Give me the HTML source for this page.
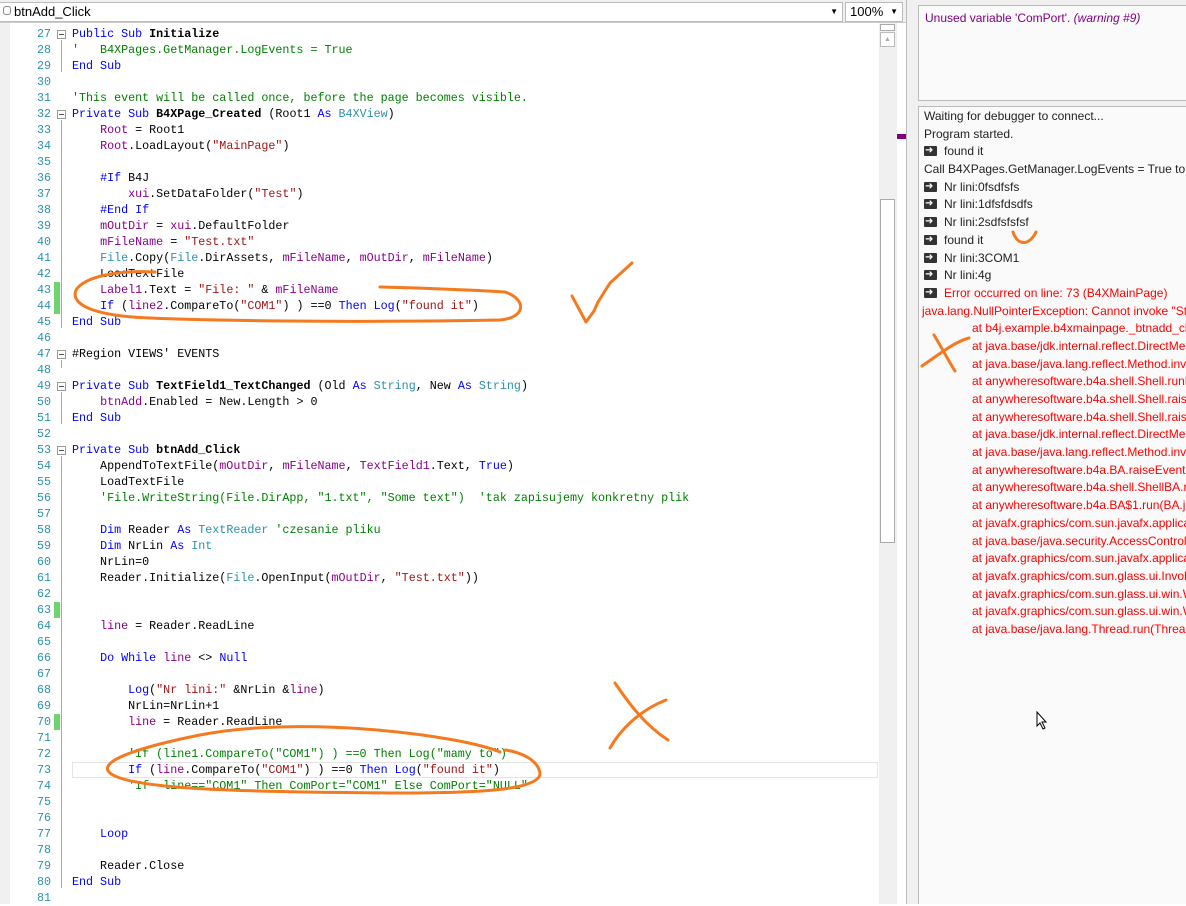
<!DOCTYPE html>
<html><head><meta charset="utf-8">
<style>
*{margin:0;padding:0;box-sizing:border-box}
body{width:1186px;height:904px;overflow:hidden;background:#fff;position:relative;font-family:"Liberation Sans",sans-serif}
.top{position:absolute;left:0;top:0;width:906px;height:23px;background:#f0f0f0;border-bottom:1px solid #ccc}
.combo{position:absolute;top:2px;height:20px;background:#fff;border:1px solid #bbb;font-size:13px;line-height:18px;padding-left:14px;color:#000}
.gut{position:absolute;left:0;top:23px;width:10px;height:881px;background:#f0f0f0}
.code{position:absolute;left:0;top:26px;width:878px;font-family:"Liberation Mono",monospace;font-size:11.7px}
.ln{height:16px;line-height:16px;position:relative;white-space:pre}
.n{position:absolute;left:10px;width:41px;text-align:right;color:#2b91af}
.t{position:absolute;left:72px;color:#000}
.k{color:#0000ff}.c{color:#008000}.s{color:#a31515}.v{color:#8b008b}.ty{color:#2b91af}.b{font-weight:bold}
.fold{position:absolute;left:57px;top:4px;width:9px;height:9px;border:1px solid #999;background:#fff}
.fold:after{content:"";position:absolute;left:1px;top:3px;width:5px;height:1px;background:#555}
.vl{position:absolute;left:61px;width:1px;background:#aaa}
.green{position:absolute;left:54px;width:6px;height:16px;background:#6ed46e}
.sb{position:absolute;left:879px;top:23px;width:18px;height:881px;background:#f0f0f0}
.right{position:absolute;left:906px;top:0;width:280px;height:904px;background:#f0f0f0;border-left:1px solid #bbb;overflow:hidden}
.box{position:absolute;left:11px;width:300px;background:#fafafa;border:1px solid #bbb;overflow:hidden}
.log{font-size:12px;line-height:17.7px;color:#222;white-space:nowrap;padding-left:5px;padding-top:1px}
.log div{height:17.7px}
.ar{display:inline-block;width:13px;height:10px;background:#333;border-radius:1px;vertical-align:-1px;margin-right:7px;position:relative}
.ar:after{content:"➜";position:absolute;left:1px;top:-4px;color:#fff;font-size:10px}
.r{color:#f00}
.at{padding-left:48px}
</style></head><body>
<div class="top">
 <div class="combo" style="left:0;width:843px;border-left:none">btnAdd_Click<span style="position:absolute;right:4px;font-size:8px">▼</span></div>
 <div style="position:absolute;left:3px;top:6px;width:8px;height:9px;border:1px solid #888;border-radius:3px"></div>
 <div class="combo" style="left:845px;width:58px;padding-left:4px">100%<span style="position:absolute;right:4px;font-size:8px">▼</span></div>
</div>
<div class="gut"></div>
<div class="vl" style="top:40px;height:32px"></div>
<div class="vl" style="top:120px;height:208px"></div>
<div class="vl" style="top:360px;height:8px"></div>
<div class="vl" style="top:392px;height:32px"></div>
<div class="vl" style="top:456px;height:432px"></div>
<div class="green" style="top:282px"></div><div class="green" style="top:298px"></div>
<div class="green" style="top:602px"></div><div class="green" style="top:714px"></div>
<div style="position:absolute;left:72px;top:762px;width:806px;height:16px;border:1px solid #e4e4e4"></div>
<div class="code">
<div class="ln"><span class="n">27</span><span class="fold"></span><span class="t"><span class="k">Public Sub</span> <span class="b">Initialize</span></span></div>
<div class="ln"><span class="n">28</span><span class="t c">'   B4XPages.GetManager.LogEvents = True</span></div>
<div class="ln"><span class="n">29</span><span class="t k">End Sub</span></div>
<div class="ln"><span class="n">30</span></div>
<div class="ln"><span class="n">31</span><span class="t c">'This event will be called once, before the page becomes visible.</span></div>
<div class="ln"><span class="n">32</span><span class="fold"></span><span class="t"><span class="k">Private Sub</span> <span class="b">B4XPage_Created</span> (Root1 <span class="k">As</span> <span class="ty">B4XView</span>)</span></div>
<div class="ln"><span class="n">33</span><span class="t">    <span class="v">Root</span> = Root1</span></div>
<div class="ln"><span class="n">34</span><span class="t">    <span class="v">Root</span>.LoadLayout(<span class="s">"MainPage"</span>)</span></div>
<div class="ln"><span class="n">35</span></div>
<div class="ln"><span class="n">36</span><span class="t">    <span class="k">#If</span> B4J</span></div>
<div class="ln"><span class="n">37</span><span class="t">        <span class="v">xui</span>.SetDataFolder(<span class="s">"Test"</span>)</span></div>
<div class="ln"><span class="n">38</span><span class="t">    <span class="k">#End If</span></span></div>
<div class="ln"><span class="n">39</span><span class="t">    <span class="v">mOutDir</span> = <span class="v">xui</span>.DefaultFolder</span></div>
<div class="ln"><span class="n">40</span><span class="t">    <span class="v">mFileName</span> = <span class="s">"Test.txt"</span></span></div>
<div class="ln"><span class="n">41</span><span class="t">    <span class="ty">File</span>.Copy(<span class="ty">File</span>.DirAssets, <span class="v">mFileName</span>, <span class="v">mOutDir</span>, <span class="v">mFileName</span>)</span></div>
<div class="ln"><span class="n">42</span><span class="t">    LoadTextFile</span></div>
<div class="ln"><span class="n">43</span><span class="t">    <span class="v">Label1</span>.Text = <span class="s">"File: "</span> &amp; <span class="v">mFileName</span></span></div>
<div class="ln"><span class="n">44</span><span class="t">    <span class="k">If</span> (<span class="v">line2</span>.CompareTo(<span class="s">"COM1"</span>) ) ==0 <span class="k">Then</span> <span class="k">Log</span>(<span class="s">"found it"</span>)</span></div>
<div class="ln"><span class="n">45</span><span class="t k">End Sub</span></div>
<div class="ln"><span class="n">46</span></div>
<div class="ln"><span class="n">47</span><span class="fold"></span><span class="t">#Region VIEWS' EVENTS</span></div>
<div class="ln"><span class="n">48</span></div>
<div class="ln"><span class="n">49</span><span class="fold"></span><span class="t"><span class="k">Private Sub</span> <span class="b">TextField1_TextChanged</span> (Old <span class="k">As</span> <span class="ty">String</span>, New <span class="k">As</span> <span class="ty">String</span>)</span></div>
<div class="ln"><span class="n">50</span><span class="t">    <span class="v">btnAdd</span>.Enabled = New.Length &gt; 0</span></div>
<div class="ln"><span class="n">51</span><span class="t k">End Sub</span></div>
<div class="ln"><span class="n">52</span></div>
<div class="ln"><span class="n">53</span><span class="fold"></span><span class="t"><span class="k">Private Sub</span> <span class="b">btnAdd_Click</span></span></div>
<div class="ln"><span class="n">54</span><span class="t">    AppendToTextFile(<span class="v">mOutDir</span>, <span class="v">mFileName</span>, <span class="v">TextField1</span>.Text, <span class="k">True</span>)</span></div>
<div class="ln"><span class="n">55</span><span class="t">    LoadTextFile</span></div>
<div class="ln"><span class="n">56</span><span class="t c">    'File.WriteString(File.DirApp, "1.txt", "Some text")  'tak zapisujemy konkretny plik</span></div>
<div class="ln"><span class="n">57</span></div>
<div class="ln"><span class="n">58</span><span class="t">    <span class="k">Dim</span> Reader <span class="k">As</span> <span class="ty">TextReader</span> <span class="c">'czesanie pliku</span></span></div>
<div class="ln"><span class="n">59</span><span class="t">    <span class="k">Dim</span> NrLin <span class="k">As</span> <span class="ty">Int</span></span></div>
<div class="ln"><span class="n">60</span><span class="t">    NrLin=0</span></div>
<div class="ln"><span class="n">61</span><span class="t">    Reader.Initialize(<span class="ty">File</span>.OpenInput(<span class="v">mOutDir</span>, <span class="s">"Test.txt"</span>))</span></div>
<div class="ln"><span class="n">62</span></div>
<div class="ln"><span class="n">63</span></div>
<div class="ln"><span class="n">64</span><span class="t">    <span class="v">line</span> = Reader.ReadLine</span></div>
<div class="ln"><span class="n">65</span></div>
<div class="ln"><span class="n">66</span><span class="t">    <span class="k">Do While</span> <span class="v">line</span> &lt;&gt; <span class="k">Null</span></span></div>
<div class="ln"><span class="n">67</span></div>
<div class="ln"><span class="n">68</span><span class="t">        <span class="k">Log</span>(<span class="s">"Nr lini:"</span> &amp;NrLin &amp;<span class="v">line</span>)</span></div>
<div class="ln"><span class="n">69</span><span class="t">        NrLin=NrLin+1</span></div>
<div class="ln"><span class="n">70</span><span class="t">        <span class="v">line</span> = Reader.ReadLine</span></div>
<div class="ln"><span class="n">71</span></div>
<div class="ln"><span class="n">72</span><span class="t c">        'If (line1.CompareTo("COM1") ) ==0 Then Log("mamy to")</span></div>
<div class="ln"><span class="n">73</span><span class="t">        <span class="k">If</span> (<span class="v">line</span>.CompareTo(<span class="s">"COM1"</span>) ) ==0 <span class="k">Then</span> <span class="k">Log</span>(<span class="s">"found it"</span>)</span></div>
<div class="ln"><span class="n">74</span><span class="t c">        'If  line=="COM1" Then ComPort="COM1" Else ComPort="NULL"</span></div>
<div class="ln"><span class="n">75</span></div>
<div class="ln"><span class="n">76</span></div>
<div class="ln"><span class="n">77</span><span class="t k">    Loop</span></div>
<div class="ln"><span class="n">78</span></div>
<div class="ln"><span class="n">79</span><span class="t">    Reader.Close</span></div>
<div class="ln"><span class="n">80</span><span class="t k">End Sub</span></div>
<div class="ln"><span class="n">81</span></div>
</div>
<div class="sb">
 <div style="position:absolute;left:1px;top:1px;width:15px;height:7px;border:1px solid #aaa;background:#fff"></div>
 <div style="position:absolute;left:1px;top:9px;width:15px;height:15px;border:1px solid #bbb;background:#fff;font-size:7px;color:#aaa;text-align:center;line-height:13px">▲</div>
 <div style="position:absolute;left:1px;top:176px;width:15px;height:344px;border:1px solid #aaa;background:#fff"></div>
</div>
<div style="position:absolute;left:897px;top:134px;width:9px;height:5px;background:#800080"></div>
<div class="right">
 <div class="box" style="top:5px;height:96px;font-size:12px;color:#800080;padding:5px 6px">Unused variable 'ComPort'. <i>(warning #9)</i></div>
 <div class="box log" style="top:106px;height:800px">
  <div>Waiting for debugger to connect...</div>
  <div>Program started.</div>
  <div><span class="ar"></span>found it</div>
  <div>Call B4XPages.GetManager.LogEvents = True to enable logs</div>
  <div><span class="ar"></span>Nr lini:0fsdfsfs</div>
  <div><span class="ar"></span>Nr lini:1dfsfdsdfs</div>
  <div><span class="ar"></span>Nr lini:2sdfsfsfsf</div>
  <div><span class="ar"></span>found it</div>
  <div><span class="ar"></span>Nr lini:3COM1</div>
  <div><span class="ar"></span>Nr lini:4g</div>
  <div class="r"><span class="ar"></span>Error occurred on line: 73 (B4XMainPage)</div>
  <div class="r" style="margin-left:-2px">java.lang.NullPointerException: Cannot invoke "String</div>
  <div class="r at">at b4j.example.b4xmainpage._btnadd_click</div>
  <div class="r at">at java.base/jdk.internal.reflect.DirectMethod</div>
  <div class="r at">at java.base/java.lang.reflect.Method.invoke</div>
  <div class="r at">at anywheresoftware.b4a.shell.Shell.runMethod</div>
  <div class="r at">at anywheresoftware.b4a.shell.Shell.raiseEvent</div>
  <div class="r at">at anywheresoftware.b4a.shell.Shell.raiseEvent</div>
  <div class="r at">at java.base/jdk.internal.reflect.DirectMethod</div>
  <div class="r at">at java.base/java.lang.reflect.Method.invoke</div>
  <div class="r at">at anywheresoftware.b4a.BA.raiseEvent2(BA</div>
  <div class="r at">at anywheresoftware.b4a.shell.ShellBA.raise</div>
  <div class="r at">at anywheresoftware.b4a.BA$1.run(BA.java</div>
  <div class="r at">at javafx.graphics/com.sun.javafx.application</div>
  <div class="r at">at java.base/java.security.AccessController</div>
  <div class="r at">at javafx.graphics/com.sun.javafx.application</div>
  <div class="r at">at javafx.graphics/com.sun.glass.ui.InvokeLater</div>
  <div class="r at">at javafx.graphics/com.sun.glass.ui.win.WinApp</div>
  <div class="r at">at javafx.graphics/com.sun.glass.ui.win.WinApp</div>
  <div class="r at">at java.base/java.lang.Thread.run(Thread.java</div>
 </div>
</div>
<svg style="position:absolute;left:0;top:0" width="1186" height="904" fill="none" stroke="#f57a1f" stroke-width="3" stroke-linecap="round" stroke-linejoin="round">
 <path d="M155 272 C120 270 85 276 76 290 C70 305 95 316 150 318 C250 322 400 322 500 320 C525 318 528 300 505 292 C470 290 420 288 380 287"/>
 <path d="M572 296 L586 322 L594 311 L598 302 L610 283 L632 263"/>
 <path d="M615 683 C630 705 645 725 668 740"/>
 <path d="M666 700 C640 710 620 730 610 748"/>
 <path d="M934 335 C942 348 948 360 955 371"/>
 <path d="M969 338 C955 342 945 350 922 366"/>
 <path d="M1013 232 C1018 247 1030 245 1036 232"/>
 <path d="M500 752 C460 735 300 715 200 735 C150 745 95 760 110 773 C130 790 250 792 400 793 C480 793 535 790 540 775 C540 760 520 752 505 750"/>
</svg>
<svg style="position:absolute;left:1036px;top:711px" width="12" height="20"><path d="M1 1 L1 15 L4 12 L7 18 L9 17 L6 11 L10 11 Z" fill="#fff" stroke="#000"/></svg>
</body></html>
